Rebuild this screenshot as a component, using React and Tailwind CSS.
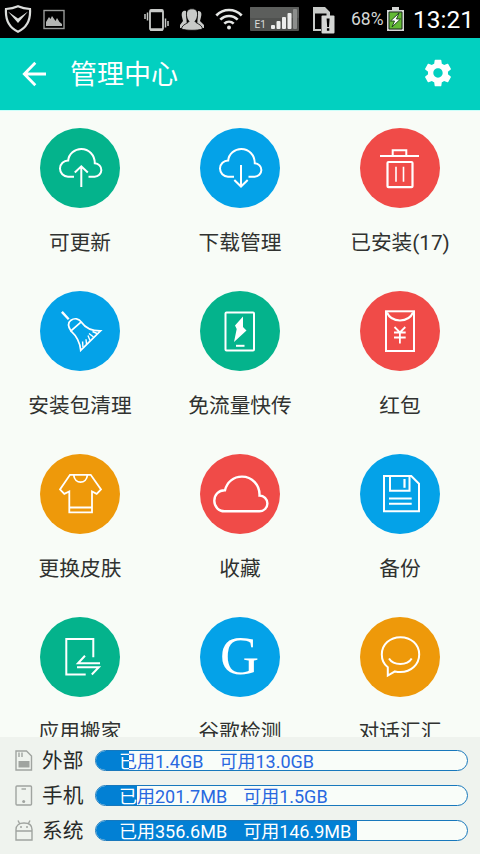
const CloudUpload = () => (
  <g>
    <path d="M34 48.700H28a8.100 8.100 0 0 1 .2-16.200C28.800 26 34.500 21 41.300 21c7.500 0 13.500 6 13.500 14.300A6.700 6.700 0 0 1 54.500 48.700H48.500" />
    <path d="M41.300 59V38.500M34.800 44.500l6.500-6.200 6.500 6.200" />
  </g>
);

const CloudDownload = () => (
  <g>
    <path d="M34 48.700H28a8.100 8.100 0 0 1 .2-16.200C28.800 26 34.500 21 41.300 21c7.500 0 13.500 6 13.500 14.300A6.700 6.700 0 0 1 54.500 48.700H48.500" />
    <path d="M41 37v21.500M34.300 52l6.700 6.500 6.700-6.500" />
  </g>
);

const Trash = () => (
  <g>
    <path d="M20 28h39M32.700 28v-5.800h13.600V28" />
    <rect x="27.500" y="34" width="25" height="25.200" rx="1" strokeWidth="2.200" />
    <path d="M36 38.700v15M43.500 38.700v15" strokeWidth="1.600" />
  </g>
);

const Broom = () => (
  <g strokeWidth="1.700">
    <path d="M21.900 20.900l6.800 7.300" strokeWidth="2.400" />
    <path d="M30.900 39.900C27.600 35 28 31.500 31 29.200c3.500-2.500 8-1.700 10.200 1.700L30.900 39.900z" />
    <path d="M41.200 30.900C45.500 37 51.500 40 60.500 39.900L40.700 59.300C40 50.500 37 45.500 30.900 39.900" />
    <path d="M42.900 56l-.3-5.500M46.500 53l-.5-4.800M50 49.500l-2-5M53.500 46l-4.500-3.500M57 42.500l-4.500-2" strokeWidth="1.400" />
  </g>
);

const Transfer = () => (
  <g>
    <rect x="25.500" y="21.500" width="28.500" height="38" rx="1" />
    <path d="M43 25.500L35 34.500l1.700 3.500-2.700 13L46.500 39.500l-3.500-3.500z" fill="white" stroke="none" />
    <path d="M36 54.800h8.500" />
  </g>
);

const RedPacket = () => (
  <g>
    <rect x="26" y="20.300" width="28" height="39.700" />
    <path d="M27 21.500c4.500 10.500 21.500 10.500 26 0" />
    <path d="M34.500 36l5.400 5.500 5.400-5.500M34 41.500h11.700M34 46.500h11.700M39.900 41.500v11" strokeWidth="1.800" />
  </g>
);

const Shirt = () => (
  <g strokeWidth="1.800">
    <path d="M30 20.800h20.700L61 35.500 56.700 39.800 52 37.500V58.300H29.300V37.500L24.300 39.800 20 35.500z" />
    <path d="M33.700 21c1 9.500 12.800 9.500 13.700 0M29.300 53.500H52" />
  </g>
);

const Cloud = () => (
  <path
    d="M24.500 57.300h35a7.900 7.900 0 0 0 0-15.800C60 31 52 22.600 42 22.600c-8.500 0-15 5.500-17 13.600C18.500 36 14.300 41 14.300 46.800c0 6 4.500 10.500 10.200 10.500z"
    strokeWidth="2.400"
  />
);

const Floppy = () => (
  <g>
    <path d="M24 22h27.300L59 29.700V57.200H24z" />
    <path d="M30 22v14.800h19.500V22" />
    <path d="M44.500 25v8.800" strokeWidth="2.200" />
    <path d="M29 44.500h22.700M29 49.800h22.700" />
  </g>
);

const MoveApp = () => (
  <g>
    <path d="M45.700 57.400H26.300V22h27v18.300" />
    <path d="M45 38.700L38 46.200h22M37 50.300h21.800l-7 7.200" />
  </g>
);

const Google = () => (
  <text
    x="39.500"
    y="57"
    textAnchor="middle"
    fill="white"
    stroke="none"
    className="font-['Liberation_Serif',serif] text-[54px]"
  >
    G
  </text>
);

const Chat = () => (
  <g>
    <path d="M27.800 50.200C23.500 47 21.800 42.500 21.800 37.500c0-10 8.200-17.300 18.700-17.300s18.700 7.300 18.700 17.300S51 55 40.500 55c-2 0-3.700-.2-5.500-.6l-7.200 4.200z" />
    <path d="M29 41.500c4.500 7.300 18.200 7.300 22.700 0" />
  </g>
);

const items = [
  { label: "可更新", color: "bg-[#04b38c]", icon: CloudUpload },
  { label: "下载管理", color: "bg-[#04a2e8]", icon: CloudDownload },
  { label: "已安装(17)", color: "bg-[#f04b48]", icon: Trash },
  { label: "安装包清理", color: "bg-[#04a2e8]", icon: Broom },
  { label: "免流量快传", color: "bg-[#04b38c]", icon: Transfer },
  { label: "红包", color: "bg-[#f04b48]", icon: RedPacket },
  { label: "更换皮肤", color: "bg-[#ee990a]", icon: Shirt },
  { label: "收藏", color: "bg-[#f04b48]", icon: Cloud },
  { label: "备份", color: "bg-[#04a2e8]", icon: Floppy },
  { label: "应用搬家", color: "bg-[#04b38c]", icon: MoveApp },
  { label: "谷歌检测", color: "bg-[#04a2e8]", icon: Google },
  { label: "对话汇汇", color: "bg-[#ee990a]", icon: Chat },
];

const SdIcon = () => (
  <svg width="18" height="21" viewBox="0 0 18 21" fill="none" stroke="#a0a4a0" strokeWidth="1.400">
    <path d="M1 1h10.500L16.500 6v14H1z" />
    <path d="M4 2.500v4.500M7 2.500v4.500" />
    <path d="M3.500 11h11v6.500h-11z" fill="#a0a4a0" stroke="none" />
  </svg>
);

const PhoneIcon = () => (
  <svg width="18" height="21" viewBox="0 0 18 21" fill="none" stroke="#a0a4a0" strokeWidth="1.400">
    <rect x="1" y="1" width="15.500" height="19" rx="1" />
    <path d="M6.500 4h4.500" />
    <circle cx="8.700" cy="16.500" r="1.500" fill="#a0a4a0" stroke="none" />
  </svg>
);

const AndroidIcon = () => (
  <svg width="18" height="21" viewBox="0 0 18 21" fill="none" stroke="#a0a4a0" strokeWidth="1.400">
    <path d="M1 20V9.500C1 5.500 4 3 9 3s8 2.500 8 6.500V20zM1 11h16M4.800 4L3 .5M13.200 4L15 .5" />
    <circle cx="6" cy="7" r="1" fill="#a0a4a0" stroke="none" />
    <circle cx="12" cy="7" r="1" fill="#a0a4a0" stroke="none" />
  </svg>
);

const storage = [
  { name: "外部", used: "已用1.4GB", free: "可用13.0GB", fill: 34, icon: SdIcon },
  { name: "手机", used: "已用201.7MB", free: "可用1.5GB", fill: 42, icon: PhoneIcon },
  { name: "系统", used: "已用356.6MB", free: "可用146.9MB", fill: 262, icon: AndroidIcon },
];

const StatusBar = () => (
  <div className="flex h-[38px] shrink-0 items-start bg-black text-[#d4d6d4]">
    <svg className="ml-[4px] mt-[4px]" width="28" height="30" viewBox="0 0 28 30" fill="none" stroke="#dcdedc" strokeWidth="2.200">
      <path d="M14 2.300c3.800 1.700 7.500 2.500 12 2.700.6 9-1.500 18-12 22.700C3.500 23 1.400 14 2 5c4.500-.2 8.200-1 12-2.700z" />
      <path d="M4 7.500L14 14.500l10-7L14 19z" fill="#dcdedc" stroke="none" />
    </svg>
    <svg className="ml-[11px] mt-[9px]" width="22" height="21" viewBox="0 0 22 21" fill="none">
      <rect x="1" y="1.500" width="20" height="18" stroke="#999b99" strokeWidth="1.400" />
      <path d="M3 17v-4l3-5 1.500 2L9 7l3.500 5 1.500-3 2.500 4 2.500 2v2z" fill="#b4b6b4" />
    </svg>
    <svg className="ml-[79px] mt-[8px]" width="25" height="25" viewBox="0 0 25 25" fill="none" stroke="#c8cac8">
      <rect x="6" y="2" width="13" height="20" rx="1.500" strokeWidth="1.800" />
      <path d="M6 3h13M6 21.500h13" strokeWidth="2.600" />
      <path d="M1 6v5M3.500 4.500v8M21.500 10.500v9M24 13v5" strokeWidth="1.500" />
    </svg>
    <svg className="ml-[10px] mt-[8px]" width="26" height="23" viewBox="0 0 26 23" fill="#c8cac8">
      <path d="M7 3c-3-1-5 1-4 6l1 4-3 4v3h7zM19 3c3 0 4 2 3 6l-1 4 4 4v3h-7z" />
      <path
        d="M13 .8c4 0 6 2.700 5.500 6.500-.3 2.500-1 4.700-2.500 6 1 2.500 6.800 2.700 7.500 7.700-5 1.700-16 1.700-21 0 .7-5 6.500-5.200 7.500-7.700-1.500-1.300-2.200-3.500-2.500-6C7 3.500 9 .8 13 .8z"
        stroke="black"
        strokeWidth=".8"
      />
    </svg>
    <svg className="ml-[10px] mt-[8px]" width="28" height="23" viewBox="0 0 28 23" fill="none" stroke="#e4e6e4" strokeWidth="2.600">
      <path d="M1.300 7.500c7.200-7.300 18.200-7.300 25.400 0M5.300 11.700c5-5 12.400-5 17.400 0M9.300 15.700c2.700-2.700 6.700-2.700 9.400 0" />
      <circle cx="14" cy="19.500" r="2" fill="#e4e6e4" stroke="none" />
    </svg>
    <svg className="ml-[7px] mt-[7px]" width="49" height="24" viewBox="0 0 49 24">
      <rect width="49" height="24" rx="1" fill="#505250" />
      <rect width="49" height="11" rx="1" fill="#5c5e5c" />
      <text x="4.500" y="21" fill="#dcdedc" className="font-[Roboto,sans-serif] text-[10px]">E1</text>
      <g fill="#ecedec">
        <rect x="21" y="18" width="4" height="4" rx="1" />
        <rect x="26.500" y="14" width="4" height="8" rx="1" />
        <rect x="32" y="10" width="4" height="12" rx="1" />
        <rect x="37.500" y="6" width="4" height="16" rx="1" />
        <rect x="43" y="2" width="4" height="20" rx="1" fill="#8c8e8c" />
      </g>
    </svg>
    <svg className="ml-[13px] mt-[6px]" width="23" height="28" viewBox="0 0 23 28">
      <path d="M1 1h12l5 5v4h-3.500V7.500H3V23h6v2H1z" fill="#c8cac8" />
      <rect x="9.500" y="9.500" width="13" height="18" rx="1" fill="#d4d6d4" />
      <path d="M14.600 12.500h3l-.6 8.500h-1.800zM14.900 22.300h2.400v2.500h-2.400z" fill="black" />
    </svg>
    <span className="ml-[16px] mt-[7px] w-[34px] text-[17.500px] leading-[24px]">68%</span>
    <svg className="ml-[2px] mt-[7px]" width="17" height="24" viewBox="0 0 17 24">
      <path d="M5 0h7v3h5v21H0V3h5z" fill="#d4d6d4" />
      <path d="M2 5h13v17H2z" fill="#62ba34" stroke="#182818" />
      <path d="M12 6L3.500 14h4L5 20l8.500-8H9.500z" fill="white" stroke="#183818" strokeWidth=".9" />
    </svg>
    <span className="ml-[9px] mt-[5px] text-[24.500px] leading-[30px] text-white">13:21</span>
  </div>
);

const Header = () => (
  <div className="flex h-[72px] shrink-0 items-center bg-[#02d0c0] text-white">
    <svg className="ml-[22px]" width="25" height="26" viewBox="0 0 25 26" fill="none" stroke="white" strokeWidth="2.800">
      <path d="M24 13H2.500M13.300 1.800L2.300 13l11 11.200" />
    </svg>
    <h1 className="ml-[23px] mt-[2px] text-[27px] leading-[36px]">管理中心</h1>
    <svg className="mr-[26.500px] mb-[2px] ml-auto" width="32" height="32" viewBox="0 0 24 24" fill="white">
      <path d="M19.430 12.980c.04-.32.070-.64.070-.98s-.03-.66-.07-.98l2.110-1.650c.19-.15.240-.42.120-.64l-2-3.460c-.12-.22-.39-.3-.61-.22l-2.490 1c-.52-.4-1.080-.73-1.690-.98l-.38-2.650C14.460 2.180 14.250 2 14 2h-4c-.25 0-.46.180-.49.420l-.38 2.650c-.61.250-1.170.590-1.690.980l-2.490-1c-.23-.09-.49 0-.61.220l-2 3.460c-.13.220-.07.490.120.640l2.110 1.650c-.04.320-.07.650-.07.980s.03.660.070.980l-2.110 1.650c-.19.150-.24.420-.12.640l2 3.460c.12.220.390.300.610.220l2.490-1c.52.400 1.080.730 1.690.980l.38 2.650c.03.240.240.420.490.420h4c.25 0 .46-.18.490-.42l.38-2.650c.61-.25 1.170-.59 1.690-.98l2.490 1c.23.090.490 0 .61-.22l2-3.460c.12-.22.070-.49-.12-.64l-2.110-1.650zM12 15.500c-1.930 0-3.500-1.570-3.500-3.500s1.570-3.500 3.500-3.500 3.500 1.570 3.500 3.500-1.570 3.500-3.500 3.500z" />
    </svg>
  </div>
);

const StorageBar = ({ used, free, fill }) => (
  <div className="relative h-[21px] w-[373px] overflow-hidden rounded-full border border-[#1878bc] bg-[#f9fdf9] text-[18px] leading-[21px] whitespace-nowrap">
    <div className="flex gap-4 pl-[23px] text-[#2868e0]">
      <span>{used}</span>
      <span>{free}</span>
    </div>
    {/* filled part carries the same caption in white */}
    <div
      aria-hidden="true"
      className="absolute -top-px -left-px h-[21px] overflow-hidden bg-[#0280d4] pt-px text-white"
      style={{ width: fill }}
    >
      <div className="flex gap-4 pl-[24px]">
        <span>{used}</span>
        <span>{free}</span>
      </div>
    </div>
  </div>
);

const App = () => {
  return (
    <div className="flex h-[854px] w-[480px] flex-col overflow-hidden bg-[#f8fcf7] font-[Roboto,'Noto_Sans_CJK_SC',sans-serif]">
      <StatusBar />
      <Header />

      <div className="grid min-h-0 flex-1 auto-rows-[163px] grid-cols-3 overflow-hidden border-t border-[#ccfffa] pt-[17px]">
        {items.map(({ label, color, icon: Icon }) => (
          <div key={label} className="flex flex-col items-center">
            <div className={`size-20 rounded-full ${color}`}>
              <svg width="80" height="80" viewBox="0 0 80 80" fill="none" stroke="white" strokeWidth="2">
                <Icon />
              </svg>
            </div>
            <span className="mt-[23px] text-[20.700px] leading-[24px] text-[#303230]">{label}</span>
          </div>
        ))}
      </div>

      <div className="flex h-[117px] shrink-0 flex-col gap-[14px] bg-[#eff3ee] pt-[13px]">
        {storage.map(({ name, used, free, fill, icon: Icon }) => (
          <div key={name} className="flex h-[21px] items-center pl-[15px]">
            <Icon />
            <span className="mt-[2px] ml-[9px] w-[53px] text-[20.700px] leading-[21px] text-[#282a28]">{name}</span>
            <StorageBar used={used} free={free} fill={fill} />
          </div>
        ))}
      </div>
    </div>
  );
};

export default App;
